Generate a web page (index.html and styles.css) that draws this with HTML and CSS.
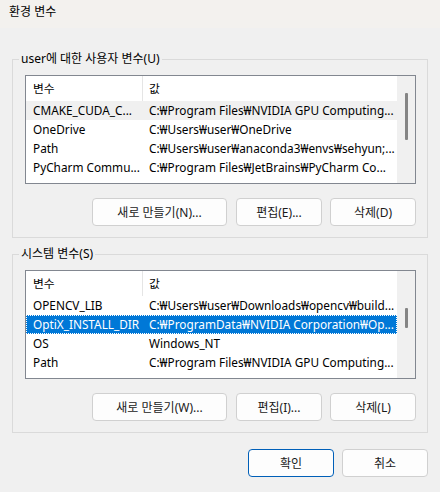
FILE: index.html
```html
<!DOCTYPE html>
<html lang="ko">
<head>
<meta charset="utf-8">
<title>환경 변수</title>
<link rel="stylesheet" href="styles.css">
</head>
<body>
<div class="titlebar">환경 변수</div>
<div class="content">
  <fieldset class="group g1">
    <legend>user에 대한 사용자 변수(U)</legend>
    <div class="listbox">
      <div class="list">
        <div class="row head"><span class="c1">변수</span><span class="c2">값</span></div>
        <div class="row hover"><span class="c1">CMAKE_CUDA_C...</span><span class="c2">C:₩Program Files₩NVIDIA GPU Computing...</span></div>
        <div class="row"><span class="c1">OneDrive</span><span class="c2">C:₩Users₩user₩OneDrive</span></div>
        <div class="row"><span class="c1">Path</span><span class="c2">C:₩Users₩user₩anaconda3₩envs₩sehyun;...</span></div>
        <div class="row"><span class="c1">PyCharm Commu...</span><span class="c2">C:₩Program Files₩JetBrains₩PyCharm Co...</span></div>
      </div>
      <div class="scrollbar"><div class="thumb t1"></div></div>
    </div>
    <div class="btnrow">
      <button class="btn wide">새로 만들기(N)...</button>
      <button class="btn">편집(E)...</button>
      <button class="btn">삭제(D)</button>
    </div>
  </fieldset>

  <fieldset class="group g2">
    <legend>시스템 변수(S)</legend>
    <div class="listbox">
      <div class="list">
        <div class="row head"><span class="c1">변수</span><span class="c2">값</span></div>
        <div class="row"><span class="c1">OPENCV_LIB</span><span class="c2">C:₩Users₩user₩Downloads₩opencv₩build...</span></div>
        <div class="row selected"><span class="c1">OptiX_INSTALL_DIR</span><span class="c2">C:₩ProgramData₩NVIDIA Corporation₩Op...</span></div>
        <div class="row"><span class="c1">OS</span><span class="c2">Windows_NT</span></div>
        <div class="row"><span class="c1">Path</span><span class="c2">C:₩Program Files₩NVIDIA GPU Computing...</span></div>
      </div>
      <div class="scrollbar"><div class="thumb t2"></div></div>
    </div>
    <div class="btnrow">
      <button class="btn wide">새로 만들기(W)...</button>
      <button class="btn">편집(I)...</button>
      <button class="btn">삭제(L)</button>
    </div>
  </fieldset>

  <div class="footer">
    <button class="btn primary">확인</button>
    <button class="btn">취소</button>
  </div>
</div>
</body>
</html>
```

FILE: styles.css
```css
* { box-sizing: border-box; }

html, body {
  margin: 0;
  padding: 0;
  background: #f0f0f0;
  width: 440px;
  height: 492px;
  overflow: hidden;
  font-family: "Noto Sans", "Noto Sans CJK KR", sans-serif;
  font-size: 12px;
  color: #000;
}

.titlebar {
  height: 28px;
  background: #f3f1ee;
  padding-left: 9px;
  line-height: 24px;
  font-size: 12px;
}

.content {
  padding: 0 12px 0 12px;
}

.group {
  margin: 0;
  border: 1px solid #dadada;
  padding: 8px 11px 11px 12px;
  min-width: 0;
}

.g1 { margin-top: 23px; }
.g2 { margin-top: 8px; }

.group legend {
  margin-left: -6px;
  padding: 0 2px;
  line-height: 16px;
  height: 16px;
}

.listbox {
  display: flex;
  height: 109px;
  border: 1px solid #828790;
  background: #fff;
  overflow: hidden;
}

.list {
  flex: 1;
  min-width: 0;
  overflow: hidden;
}

.row {
  display: flex;
  height: 19px;
  line-height: 19px;
  white-space: nowrap;
  font-size: 11.8px;
}

.row.head {
  height: 25px;
  line-height: 25px;
}

.c1 {
  width: 117px;
  flex: none;
  padding-left: 7px;
  overflow: hidden;
}

.c2 {
  flex: 1;
  padding-left: 6px;
  overflow: hidden;
}

.head .c1 {
  border-right: 1px solid #e5e5e5;
}

.row.hover { background: #f0f0f0; }

.row.selected {
  background: #0078d7;
  color: #fff;
  outline: 1px dotted #ffffff;
  outline-offset: -1px;
}

.scrollbar {
  width: 18px;
  flex: none;
  background: #f0f0f0;
  display: flex;
  justify-content: center;
}

.thumb {
  width: 3px;
  background: #858585;
  border-radius: 1px;
}

.t1 { margin-top: 17px; height: 47px; }
.t2 { margin-top: 37px; height: 20px; }

.btnrow {
  display: flex;
  justify-content: flex-end;
  margin-top: 14px;
  gap: 8px;
}

.btn {
  width: 86px;
  height: 28px;
  border: 1px solid #d0d0d0;
  border-radius: 4px;
  background: #fdfdfd;
  font-family: inherit;
  font-size: 12px;
  color: #1a1a1a;
  padding: 0;
}

.btn.wide {
  width: 135px;
  margin-right: 1px;
}

.btn.primary {
  border-color: #005fb8;
}

.footer {
  display: flex;
  justify-content: flex-end;
  gap: 8px;
  margin-top: 16px;
}
```
